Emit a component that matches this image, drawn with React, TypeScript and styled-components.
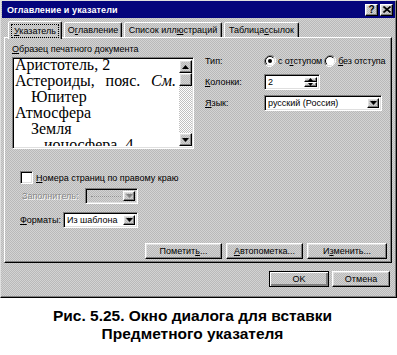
import React, { FC } from "react";
import styled, { createGlobalStyle, css } from "styled-components";

const GlobalStyle = createGlobalStyle`
  html, body {
    margin: 0;
    padding: 0;
    background: #fff;
  }
  body {
    font-family: "Liberation Sans", Arial, sans-serif;
    font-size: 9px;
    color: #000;
  }
  u {
    text-decoration-thickness: 1px;
    text-underline-offset: 1px;
  }
`;

const dither = css`
  background: repeating-conic-gradient(#b9b9b9 0% 25%, #d3d3d3 0% 50%) 0 0 / 2px 2px;
`;

const raised = css`
  border: 1px solid;
  border-color: #fff #000 #000 #fff;
  box-shadow: inset -1px -1px #808080, inset 1px 1px #dfdfdf;
  box-sizing: border-box;
`;

const sunken = css`
  border: 1px solid;
  border-color: #808080 #fff #fff #808080;
  box-shadow: inset 1px 1px #000, inset -1px -1px #dfdfdf;
  box-sizing: border-box;
`;

const DownArrow: FC<{ color?: string }> = ({ color = "#000" }) => (
  <svg width="7" height="4" viewBox="0 0 7 4">
    <path d="M0 0h7L3.5 4z" fill={color} />
  </svg>
);

const UpArrow: FC = () => (
  <svg width="7" height="4" viewBox="0 0 7 4">
    <path d="M0 4h7L3.5 0z" fill="#000" />
  </svg>
);

const Radio: FC<{ checked?: boolean }> = ({ checked }) => (
  <svg width="12" height="12" viewBox="0 0 12 12">
    <path d="M10.2 1.8A6 6 0 0 0 1.8 10.2" stroke="#808080" strokeWidth="1" fill="none" />
    <path d="M1.8 10.2A6 6 0 0 0 10.2 1.8" stroke="#fff" strokeWidth="1" fill="none" />
    <circle cx="6" cy="6" r="4.5" fill="#fff" />
    <path d="M9.2 2.8A4.5 4.5 0 0 0 2.8 9.2" stroke="#000" strokeWidth="1" fill="none" />
    {checked && <circle cx="6" cy="6" r="2" fill="#000" />}
  </svg>
);

const App: FC = () => (
  <>
    <GlobalStyle />
    <Dialog>
      <TitleBar>
        <TitleText>Оглавление и указатели</TitleText>
        <CaptionButton>?</CaptionButton>
        <CaptionButton>
          <svg width="8" height="7" viewBox="0 0 8 7">
            <path d="M0.5 0.5l7 6M7.5 0.5l-7 6" stroke="#000" strokeWidth="1.6" />
          </svg>
        </CaptionButton>
      </TitleBar>

      <Body>
        <TabRow>
          <Tab $active $w={54}>
            <Focus>
              <u>У</u>казатель
            </Focus>
          </Tab>
          <Tab $w={58}>
            О<u>г</u>лавление
          </Tab>
          <Tab $w={98}>
            Список илл<u>ю</u>страций
          </Tab>
          <Tab $w={75}>
            Таблица <u>с</u>сылок
          </Tab>
        </TabRow>

        <Panel>
          <TopSection>
            <PreviewColumn>
              <FieldLabel>
                <u>О</u>бразец печатного документа
              </FieldLabel>
              <PreviewBox>
                <PreviewText>
                  <PreviewLine>Аристотель, 2</PreviewLine>
                  <PreviewLine $spread>
                    <span>Астероиды,</span>
                    <span>пояс.</span>
                    <i>См.</i>
                  </PreviewLine>
                  <PreviewLine $indent={16}>Юпитер</PreviewLine>
                  <PreviewLine>Атмосфера</PreviewLine>
                  <PreviewLine $indent={16}>Земля</PreviewLine>
                  <PreviewLine $indent={29}>ионосфера, 4</PreviewLine>
                </PreviewText>
                <ScrollBar>
                  <ScrollButton>
                    <UpArrow />
                  </ScrollButton>
                  <ScrollThumb />
                  <ScrollTrack />
                  <ScrollButton>
                    <DownArrow />
                  </ScrollButton>
                </ScrollBar>
              </PreviewBox>
            </PreviewColumn>

            <OptionsGrid>
              <OptionLabel>Тип:</OptionLabel>
              <RadioGroup>
                <RadioItem>
                  <Radio checked />
                  <span>
                    с о<u>т</u>ступом
                  </span>
                </RadioItem>
                <RadioItem>
                  <Radio />
                  <span>
                    <u>б</u>ез отступа
                  </span>
                </RadioItem>
              </RadioGroup>

              <OptionLabel>
                <u>К</u>олонки:
              </OptionLabel>
              <SpinBox>
                <FieldValue>2</FieldValue>
                <Spinner>
                  <SpinButton>
                    <UpArrow />
                  </SpinButton>
                  <SpinButton>
                    <DownArrow />
                  </SpinButton>
                </Spinner>
              </SpinBox>

              <OptionLabel>
                <u>Я</u>зык:
              </OptionLabel>
              <Select $w={118}>
                <FieldValue>русский (Россия)</FieldValue>
                <SelectButton>
                  <DownArrow />
                </SelectButton>
              </Select>
            </OptionsGrid>
          </TopSection>

          <CheckRow>
            <CheckBox />
            <span>
              <u>Н</u>омера страниц по правому краю
            </span>
          </CheckRow>

          <FormRow $top={4}>
            <DisabledLabel $w={65}>Заполнитель:</DisabledLabel>
            <Select $w={53} $disabled>
              <FieldValue>
                <Dots />
              </FieldValue>
              <SelectButton>
                <DownArrow color="#808080" />
              </SelectButton>
            </Select>
          </FormRow>

          <FormRow $top={8}>
            <RowLabel $w={43}>
              <u>Ф</u>орматы:
            </RowLabel>
            <Select $w={75}>
              <FieldValue>Из шаблона</FieldValue>
              <SelectButton>
                <DownArrow />
              </SelectButton>
            </Select>
          </FormRow>

          <ActionRow>
            <PushButton $w={77}>
              Пометит<u>ь</u>...
            </PushButton>
            <PushButton $w={77}>
              <u>А</u>втопометка...
            </PushButton>
            <PushButton $w={80}>
              И<u>з</u>менить...
            </PushButton>
          </ActionRow>
        </Panel>

        <DialogFooter>
          <PushButton $w={60} $default>
            OK
          </PushButton>
          <PushButton $w={58}>Отмена</PushButton>
        </DialogFooter>
      </Body>
    </Dialog>

    <Caption>
      Рис. 5.25. Окно диалога для вставки
      <br />
      Предметного указателя
    </Caption>
  </>
);

export default App;

const Dialog = styled.div`
  ${dither}
  width: 397px;
  height: 298px;
  box-sizing: border-box;
  border: 1px solid;
  border-color: #dfdfdf #000 #000 #dfdfdf;
  box-shadow: inset -1px -1px #808080;
  display: flex;
  flex-direction: column;
`;

const TitleBar = styled.div`
  height: 17px;
  margin: 0 1px 0 1px;
  background: #04047c;
  display: flex;
  align-items: center;
  gap: 2px;
  padding: 0 2px 0 5px;
`;

const TitleText = styled.div`
  flex: 1;
  color: #fff;
  font-weight: bold;
  font-size: 9px;
  letter-spacing: 0.1px;
`;

const CaptionButton = styled.div`
  ${raised}
  ${dither}
  width: 13px;
  height: 12px;
  display: flex;
  align-items: center;
  justify-content: center;
  font-weight: bold;
  font-size: 10px;
  line-height: 1;
`;

const Body = styled.div`
  display: flex;
  flex-direction: column;
  padding: 3px 4px 0 3px;
`;

const TabRow = styled.div`
  display: flex;
  align-items: flex-end;
  height: 16px;
  padding-left: 4px;
  position: relative;
  z-index: 1;
`;

const Tab = styled.div<{ $active?: boolean; $w: number }>`
  ${dither}
  box-sizing: border-box;
  width: ${(p) => p.$w}px;
  height: ${(p) => (p.$active ? 18 : 15)}px;
  margin-bottom: ${(p) => (p.$active ? -2 : 0)}px;
  border: 1px solid;
  border-bottom: none;
  border-color: #fff #000 transparent #fff;
  border-radius: 2px 2px 0 0;
  box-shadow: inset -1px 0 #808080;
  display: flex;
  align-items: center;
  justify-content: center;
  white-space: nowrap;
  margin-right: 2px;
`;

const Focus = styled.span`
  outline: 1px dotted #000;
  outline-offset: 1px;
  padding: 0 1px;
`;

const Panel = styled.div`
  ${dither}
  height: 226px;
  box-sizing: border-box;
  border: 1px solid;
  border-color: #fff #000 #000 #fff;
  box-shadow: inset -1px -1px #808080;
  padding: 6px 4px 0 7px;
  display: flex;
  flex-direction: column;
`;

const TopSection = styled.div`
  display: flex;
  gap: 11px;
`;

const PreviewColumn = styled.div`
  width: 182px;
  flex-shrink: 0;
  display: flex;
  flex-direction: column;
`;

const FieldLabel = styled.div`
  height: 13px;
  line-height: 11px;
  white-space: nowrap;
`;

const PreviewBox = styled.div`
  ${sunken}
  height: 92px;
  background: #fff;
  display: flex;
  padding: 0 1px 2px 2px;
  overflow: hidden;
`;

const PreviewText = styled.div`
  flex: 1;
  min-width: 0;
  margin-top: -1px;
  font-family: "Liberation Serif", "Times New Roman", serif;
  font-size: 16px;
  line-height: 16px;
  padding: 0 3px 0 0;
  overflow: hidden;
`;

const PreviewLine = styled.div<{ $indent?: number; $spread?: boolean }>`
  white-space: nowrap;
  padding-left: ${(p) => p.$indent ?? 0}px;
  ${(p) =>
    p.$spread &&
    css`
      display: flex;
      justify-content: space-between;
    `}
`;

const ScrollBar = styled.div`
  width: 13px;
  margin-top: 2px;
  display: flex;
  flex-direction: column;
  background: repeating-conic-gradient(#c0c0c0 0% 25%, #fff 0% 50%) 0 0 / 2px 2px;
`;

const ScrollButton = styled.div`
  ${raised}
  ${dither}
  height: 13px;
  display: flex;
  align-items: center;
  justify-content: center;
`;

const ScrollThumb = styled.div`
  ${raised}
  ${dither}
  height: 13px;
`;

const ScrollTrack = styled.div`
  flex: 1;
`;

const OptionsGrid = styled.div`
  flex: 1;
  min-width: 0;
  margin-top: 9px;
  display: grid;
  grid-template-columns: 59px 1fr;
  grid-template-rows: 16px 16px 16px;
  row-gap: 5px;
  align-items: center;
  align-content: start;
`;

const OptionLabel = styled.div`
  white-space: nowrap;
`;

const RadioGroup = styled.div`
  display: flex;
  gap: 2px;
  white-space: nowrap;
  letter-spacing: -0.1px;
`;

const RadioItem = styled.div`
  display: flex;
  align-items: center;
  gap: 2px;
`;

const SpinBox = styled.div`
  ${sunken}
  width: 56px;
  height: 16px;
  background: #fff;
  display: flex;
  padding: 2px;
`;

const FieldValue = styled.div`
  flex: 1;
  display: flex;
  align-items: center;
  padding-left: 1px;
  white-space: nowrap;
  overflow: hidden;
`;

const Spinner = styled.div`
  width: 13px;
  display: flex;
  flex-direction: column;
`;

const SpinButton = styled.div`
  ${raised}
  ${dither}
  flex: 1;
  display: flex;
  align-items: center;
  justify-content: center;
  svg {
    width: 5px;
    height: 3px;
  }
`;

const Select = styled.div<{ $w: number; $disabled?: boolean }>`
  ${sunken}
  width: ${(p) => p.$w}px;
  height: 16px;
  ${(p) =>
    p.$disabled
      ? dither
      : css`
          background: #fff;
        `}
  display: flex;
  padding: 2px;
`;

const SelectButton = styled.div`
  ${raised}
  ${dither}
  width: 12px;
  display: flex;
  align-items: center;
  justify-content: center;
`;

const Dots = styled.div`
  width: 30px;
  margin-left: 2px;
  border-bottom: 1px dotted #909090;
`;

const CheckRow = styled.div`
  margin-top: 22px;
  margin-left: 8px;
  display: flex;
  align-items: center;
  gap: 3px;
  height: 13px;
  white-space: nowrap;
`;

const CheckBox = styled.div`
  ${sunken}
  width: 13px;
  height: 13px;
  background: #fff;
`;

const FormRow = styled.div<{ $top: number }>`
  margin-top: ${(p) => p.$top}px;
  margin-left: 8px;
  display: flex;
  align-items: center;
`;

const RowLabel = styled.div<{ $w: number }>`
  width: ${(p) => p.$w}px;
  white-space: nowrap;
`;

const DisabledLabel = styled(RowLabel)`
  color: #888;
  text-shadow: 1px 1px #fff;
  padding-left: 2px;
  box-sizing: border-box;
`;

const ActionRow = styled.div`
  margin-top: 15px;
  display: flex;
  justify-content: flex-end;
  gap: 4px;
`;

const PushButton = styled.div<{ $w: number; $default?: boolean }>`
  ${dither}
  width: ${(p) => p.$w}px;
  height: 16px;
  box-sizing: border-box;
  border: 1px solid;
  border-color: ${(p) => (p.$default ? "#000" : "#fff #000 #000 #fff")};
  box-shadow: ${(p) =>
    p.$default
      ? "inset 1px 1px #fff, inset -2px -2px #808080"
      : "inset -1px -1px #808080, inset 1px 1px #dfdfdf"};
  display: flex;
  align-items: center;
  justify-content: center;
  white-space: nowrap;
`;

const DialogFooter = styled.div`
  display: flex;
  justify-content: flex-end;
  gap: 3px;
  margin-top: 8px;
  padding-right: 2px;
`;

const Caption = styled.div`
  width: 397px;
  box-sizing: border-box;
  padding-right: 12px;
  margin-top: 9px;
  text-align: center;
  font-family: "Liberation Sans", Arial, sans-serif;
  font-weight: bold;
  font-size: 15.5px;
  line-height: 18px;
`;
